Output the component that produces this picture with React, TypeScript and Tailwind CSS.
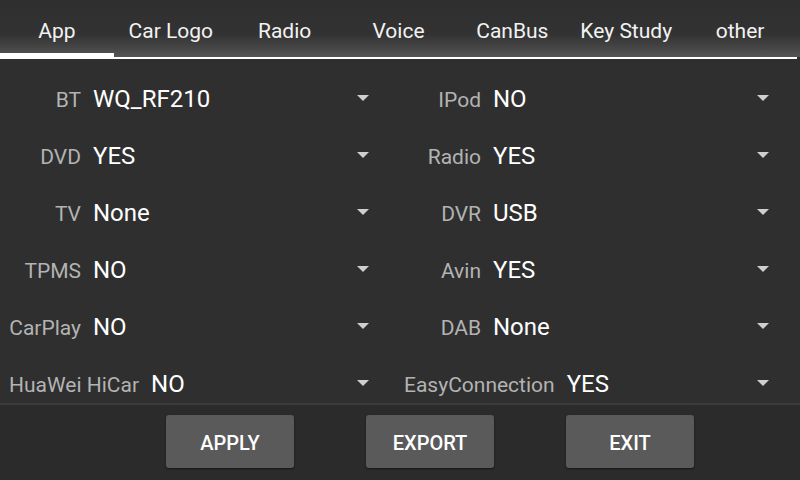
import React, { useState } from "react";

const tabs = ["App", "Car Logo", "Radio", "Voice", "CanBus", "Key Study", "other"];

type Row = { label: string; value: string };

const leftRows: Row[] = [
  { label: "BT", value: "WQ_RF210" },
  { label: "DVD", value: "YES" },
  { label: "TV", value: "None" },
  { label: "TPMS", value: "NO" },
  { label: "CarPlay", value: "NO" },
  { label: "HuaWei HiCar", value: "NO" },
];

const rightRows: Row[] = [
  { label: "IPod", value: "NO" },
  { label: "Radio", value: "YES" },
  { label: "DVR", value: "USB" },
  { label: "Avin", value: "YES" },
  { label: "DAB", value: "None" },
  { label: "EasyConnection", value: "YES" },
];

const Arrow = () => (
  <svg width="12" height="6" viewBox="0 0 12 6" className="shrink-0">
    <path d="M0 0 L12 0 L6 6 Z" fill="#cfcfcf" />
  </svg>
);

const SettingRow = ({ row, right }: { row: Row; right?: boolean }) => (
  <div className="flex h-[40px] items-center">
    <div
      className={`flex shrink-0 items-baseline whitespace-nowrap ${
        right ? "pl-[4px]" : "pl-[9px]"
      } flex-1 pt-[1px]`}
    >
      <span
        className={`${
          right ? "min-w-[77px]" : "min-w-[72px]"
        } text-right text-[21px] text-[#b3b3b3]`}
      >
        {row.label}
      </span>
      <span className="ml-[12px] text-[24px] text-white">{row.value}</span>
    </div>
    <div className="mr-[31px]">
      <Arrow />
    </div>
  </div>
);

const App = () => {
  const [active, setActive] = useState(0);

  return (
    <div
      className="flex h-[480px] w-[800px] flex-col bg-[#2f2f2f]"
      style={{ fontFamily: "Roboto, 'Noto Sans', sans-serif" }}
    >
      {/* Tabs */}
      <div className="bg-gradient-to-b from-[#2f2f2f] via-[#323232] via-60% to-[#545454]">
        <div className="flex w-[797px]">
          {tabs.map((t, i) => (
            <button
              key={t}
              onClick={() => setActive(i)}
              className="flex h-[57px] flex-1 flex-col"
            >
              <div className="flex h-[53px] items-center justify-center pt-[10px] text-[21px] text-[#f2f2f2]">
                {t}
              </div>
              <div
                className={`h-[4px] w-full ${active === i ? "bg-white" : ""}`}
              />
            </button>
          ))}
        </div>
      </div>
      <div className="h-[2px] w-[797px] bg-white" />

      {/* Settings */}
      <div className="grid grid-cols-2 pt-[19px]">
        {[leftRows, rightRows].map((rows, c) => (
          <div key={c} className="flex flex-col gap-[17px]">
            {rows.map((r) => (
              <SettingRow key={r.label} row={r} right={c === 1} />
            ))}
          </div>
        ))}
      </div>

      <div className="h-[2px] w-full bg-[#3a3a3a]" />

      {/* Buttons */}
      <div className="flex flex-1 gap-[72px] bg-[#2b2b2b] pl-[166px] pt-[10px]">
        {["APPLY", "EXPORT", "EXIT"].map((b) => (
          <button
            key={b}
            className="h-[53px] w-[128px] rounded-[3px] bg-[#5a5a5a] pt-[3px] text-[20px] font-medium text-white shadow-[0_1px_2px_rgba(0,0,0,0.5)]"
          >
            {b}
          </button>
        ))}
      </div>
    </div>
  );
};

export default App;
